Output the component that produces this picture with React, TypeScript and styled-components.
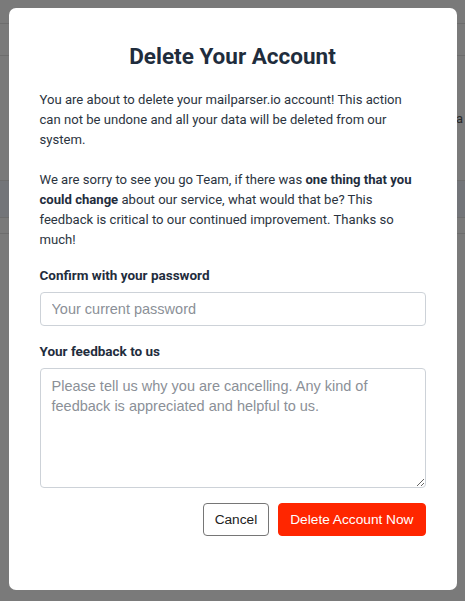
import React from "react";
import styled, { createGlobalStyle } from "styled-components";

const GlobalStyle = createGlobalStyle`
  html, body { margin: 0; padding: 0; }
  body {
    background: #7a7a7a;
    font-family: Roboto, "Noto Sans", Arial, sans-serif;
    width: 465px;
    height: 601px;
    overflow: hidden;
  }
  * { box-sizing: border-box; }
`;

const Page = styled.div`
  display: flex;
  flex-direction: column;
  height: 601px;
`;

const PageRow = styled.div<{ $h: number; $bg?: string }>`
  height: ${(p) => p.$h}px;
  border-bottom: 1px solid #6d6d6d;
  background: ${(p) => p.$bg || "transparent"};
  display: flex;
  justify-content: flex-end;
  align-items: center;
`;

const PageText = styled.span`
  font-size: 13px;
  color: #2a2a2a;
  margin-right: 2px;
`;

const Overlay = styled.div`
  position: fixed;
  inset: 0;
  display: flex;
  justify-content: center;
  align-items: flex-start;
  padding-top: 8px;
`;

const Modal = styled.div`
  width: 448px;
  height: 582px;
  background: #ffffff;
  border-radius: 7px;
  padding: 35px 31px 0 31px;
  display: flex;
  flex-direction: column;
`;

const Title = styled.h2`
  margin: 0 0 21px 0;
  font-size: 22.5px;
  line-height: 26px;
  font-weight: 700;
  color: #1f2d3d;
  text-align: center;
`;

const Paragraph = styled.p`
  margin: 0 0 20px 0;
  font-size: 13.1px;
  line-height: 20px;
  color: #2b3440;
  strong { font-weight: 700; color: #1f2d3d; }
`;

const Label = styled.label`
  display: block;
  font-size: 13.5px;
  line-height: 20px;
  font-weight: 700;
  color: #1f2d3d;
  margin-top: -5px;
  margin-bottom: 7px;
`;

const Field = styled.div`
  display: flex;
  flex-direction: column;
  margin-bottom: 20px;
`;

const Input = styled.input`
  width: 100%;
  height: 34px;
  border: 1px solid #cdd2d8;
  border-radius: 4px;
  padding: 0 11px;
  font-family: "Liberation Sans", Arial, sans-serif;
  font-size: 14.5px;
  color: #333;
  outline: none;
  &::placeholder { color: #8b9097; }
`;

const TextArea = styled.textarea`
  width: 100%;
  height: 120px;
  border: 1px solid #cdd2d8;
  border-radius: 4px;
  padding: 7px 11px;
  font-family: "Liberation Sans", Arial, sans-serif;
  font-size: 14.5px;
  line-height: 20px;
  color: #333;
  outline: none;
  resize: vertical;
  &::placeholder { color: #8b9097; }
`;

const Actions = styled.div`
  display: flex;
  justify-content: flex-end;
  gap: 9px;
  margin-top: -5px;
`;

const Button = styled.button<{ $danger?: boolean }>`
  height: 33px;
  padding: 0 ${(p) => (p.$danger ? "11px" : "11px")};
  border-radius: 4px;
  font-family: "Liberation Sans", Arial, sans-serif;
  font-size: 13.7px;
  cursor: pointer;
  border: 1px solid ${(p) => (p.$danger ? "#ff2600" : "#767676")};
  background: ${(p) => (p.$danger ? "#ff2600" : "#ffffff")};
  color: ${(p) => (p.$danger ? "#ffffff" : "#222222")};
`;

export default function App() {
  return (
    <>
      <GlobalStyle />
      <Page>
        <PageRow $h={24} />
        <PageRow $h={32} />
        <PageRow $h={125}>
          <PageText>a</PageText>
        </PageRow>
        <PageRow $h={37} $bg="#737579" />
        <PageRow $h={16} />
      </Page>
      <Overlay>
        <Modal>
          <Title>Delete Your Account</Title>
          <Paragraph>
            You are about to delete your mailparser.io account! This action can
            not be undone and all your data will be deleted from our system.
          </Paragraph>
          <Paragraph>
            We are sorry to see you go Team, if there was{" "}
            <strong>one thing that you could change</strong> about our service,
            what would that be? This feedback is critical to our continued
            improvement. Thanks so much!
          </Paragraph>
          <Field>
            <Label>Confirm with your password</Label>
            <Input type="password" placeholder="Your current password" />
          </Field>
          <Field>
            <Label>Your feedback to us</Label>
            <TextArea placeholder="Please tell us why you are cancelling. Any kind of feedback is appreciated and helpful to us." />
          </Field>
          <Actions>
            <Button>Cancel</Button>
            <Button $danger>Delete Account Now</Button>
          </Actions>
        </Modal>
      </Overlay>
    </>
  );
}
